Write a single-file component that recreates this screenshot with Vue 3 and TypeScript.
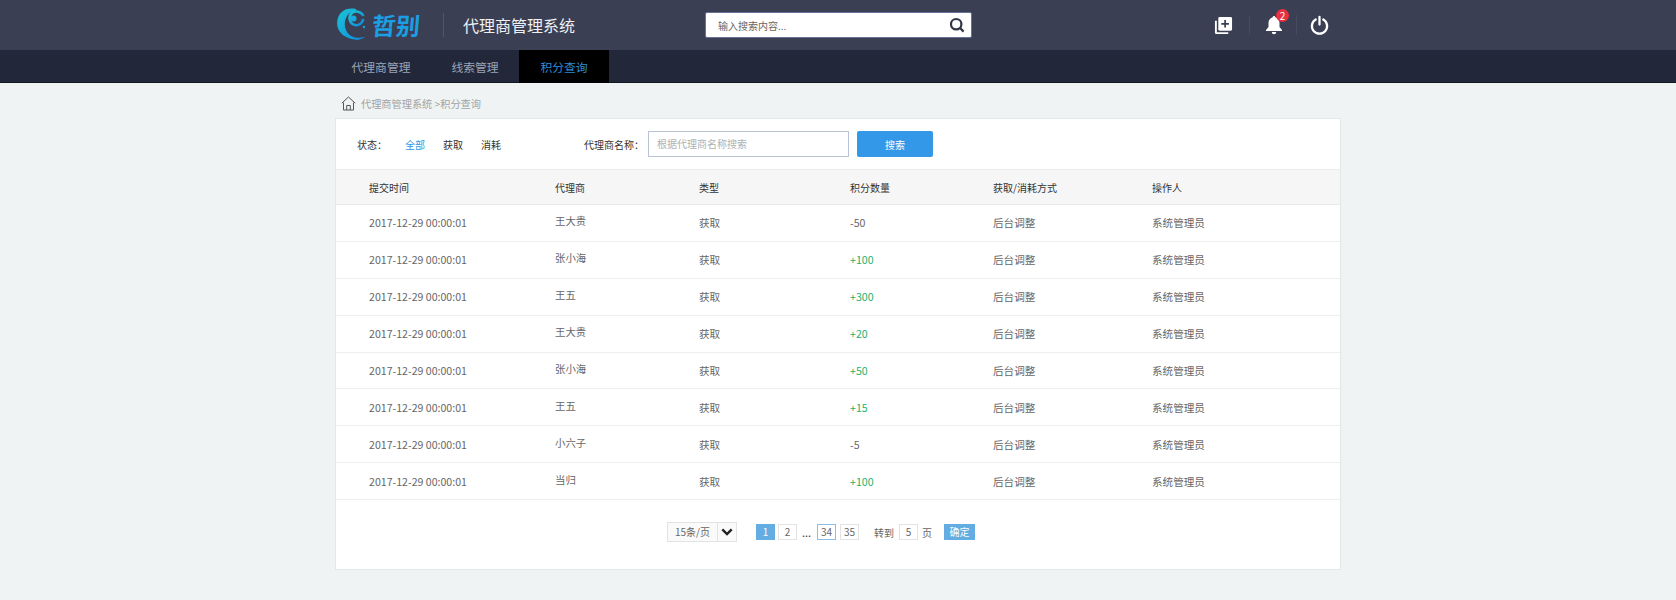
<script setup lang="ts">
interface Row { name: string; points: string }
const rows: Row[] = [
  { name: '王大贵', points: '-50' },
  { name: '张小海', points: '+100' },
  { name: '王五', points: '+300' },
  { name: '王大贵', points: '+20' },
  { name: '张小海', points: '+50' },
  { name: '王五', points: '+15' },
  { name: '小六子', points: '-5' },
  { name: '当归', points: '+100' },
]
</script>

<template>
  <div class="page">
    <header class="top">
      <div class="wrap top-in">
        <div class="logo">
          <svg width="31" height="34" viewBox="0 0 31 34">
            <defs>
              <linearGradient id="lg" x1="0" y1="0" x2="1" y2="1">
                <stop offset="0" stop-color="#19c6d6" />
                <stop offset="1" stop-color="#1088dd" />
              </linearGradient>
            </defs>
            <path fill="url(#lg)" d="M20 1C10 -1 3 4 1.500 12c-2 10 5 21 27.500 20-3 0-5 0-7-.500 3-.5 5-1 7-2.500-8 2-15 0-18-5C8 19 8 13 11 8c2-3 5-5 9-5z" />
            <path fill="none" stroke="url(#lg)" stroke-width="2.600" stroke-linecap="round" d="M27 7c-3-4-9-5-12-1-3 4-1 10 4 11 4 1 7-2 8-5" />
            <circle cx="17.500" cy="10.500" r="3" fill="#1aa8e0" />
            <circle cx="28" cy="19" r="1.200" fill="#1aa0e4" />
          </svg>
          <span class="logo-text">哲别</span>
        </div>
        <i class="logo-sep"></i>
        <span class="sys">代理商管理系统</span>
        <div class="search">
          <span>输入搜索内容...</span>
          <svg width="16" height="16" viewBox="0 0 16 16" fill="none" stroke="#2f3542" stroke-width="2.200">
            <circle cx="7.200" cy="7.200" r="5.200" />
            <path d="M10.800 10.800l3.800 3.800" />
          </svg>
        </div>
        <div class="tools">
          <svg width="19" height="19" viewBox="0 0 20 20">
            <path fill="#fff" d="M1 5h2v12h12v2H2.500A1.500 1.500 0 0 1 1 17.500z" />
            <rect x="4.500" y="1" width="14.500" height="14.500" rx="1.500" fill="#fff" />
            <path stroke="#3a3f54" stroke-width="1.800" d="M11.700 4.200v8M7.700 8.200h8" />
          </svg>
          <i class="tool-sep a"></i>
          <div class="bell">
            <svg width="18" height="20" viewBox="0 0 18 20">
              <path fill="#fff" d="M9 1c.8 0 1.300.6 1.300 1.300C13 3 14.500 5.300 14.500 8v4l2.500 3v1H1v-1l2.500-3V8c0-2.700 1.500-5 4.200-5.700C7.700 1.600 8.200 1 9 1z" />
              <path fill="#fff" d="M6.800 17h4.400a2.200 2.200 0 0 1-4.400 0z" />
            </svg>
            <b>2</b>
          </div>
          <i class="tool-sep b"></i>
          <svg width="19" height="20" viewBox="0 0 20 20" fill="none" stroke="#fff" stroke-width="2.400" stroke-linecap="round">
            <path d="M6 4.200a8 8 0 1 0 8 0" />
            <path d="M10 1.500v8" />
          </svg>
        </div>
      </div>
    </header>

    <nav class="nav">
      <div class="wrap nav-in">
        <a class="n1">代理商管理</a>
        <a class="n2">线索管理</a>
        <a class="n3">积分查询</a>
      </div>
    </nav>

    <main class="wrap">
      <div class="crumb">
        <svg width="15" height="15" viewBox="0 0 15 15" fill="none" stroke="#555" stroke-width="1">
          <path d="M.8 7.200L7.500 1l6.700 6.200M2.500 6.500v7.500h10V6.500M5.700 14V9.500h3.600V14" />
        </svg>
        <span>代理商管理系统 &gt;积分查询</span>
      </div>

      <section class="panel">
        <div class="filter">
          <span class="f-label">状态：</span>
          <a class="f-on">全部</a>
          <a class="f-a">获取</a>
          <a class="f-a">消耗</a>
          <span class="f-name">代理商名称：</span>
          <div class="f-input">根据代理商名称搜索</div>
          <button class="f-btn" type="button">搜索</button>
        </div>

        <div class="row head">
          <span>提交时间</span><span>代理商</span><span>类型</span><span>积分数量</span><span>获取/消耗方式</span><span>操作人</span>
        </div>
        <div v-for="(r, i) in rows" :key="i" class="row body">
          <span>2017-12-29 00:00:01</span>
          <span class="agent">{{ r.name }}</span>
          <span>获取</span>
          <span :class="{ plus: r.points.startsWith('+') }">{{ r.points }}</span>
          <span>后台调整</span>
          <span>系统管理员</span>
        </div>

        <div class="pager">
          <div class="size"><span>15条/页</span><i><svg width="12" height="8" viewBox="0 0 12 8" fill="none" stroke="#222" stroke-width="2.400"><path d="M1.300 1.300L6 6l4.700-4.700" /></svg></i></div>
          <a class="pg on">1</a>
          <a class="pg">2</a>
          <span class="dots">...</span>
          <a class="pg cur">34</a>
          <a class="pg">35</a>
          <span class="go">转到</span>
          <a class="pg five">5</a>
          <span class="ye">页</span>
          <a class="ok">确定</a>
        </div>
      </section>
    </main>
  </div>
</template>

<style>
html, body { margin: 0; background: #eff3f4; }
</style>

<style scoped>
.page { height: 600px; overflow: hidden; background: #eff3f4; font-family: "Noto Sans CJK SC", "Noto Sans", sans-serif; font-size: 11px; color: #666; }
.wrap { width: 1006px; margin-left: 335px; }
.top { height: 50px; background: #3b3f54; }
.top-in { height: 50px; display: flex; align-items: center; }
.logo { display: flex; align-items: center; width: 108px; padding-left: 1px; box-sizing: border-box; }
.logo-text { font-size: 24px; line-height: 30px; font-weight: 700; color: #1a9fe4; margin-left: 5px; transform: skewX(-5deg); }
.logo-sep { width: 1px; height: 24px; background: #50556a; }
.sys { margin-left: 19px; font-size: 16px; color: #eef0f3; line-height: 50px; }
.search { width: 267px; height: 26px; box-sizing: border-box; margin-left: 130px; background: #fff; border-radius: 2px; border: 1px solid #6a7199; display: flex; align-items: center; justify-content: space-between; padding: 0 6px 0 12px; color: #666; font-size: 10px; }
.tools { margin-left: auto; margin-right: 12px; display: flex; align-items: center; }
.tool-sep { width: 1px; height: 20px; background: #474b60; }
.tool-sep.a { margin: 0 15px 0 16px; }
.tool-sep.b { margin: 0 13px; }
.bell { position: relative; width: 18px; height: 20px; }
.bell b { position: absolute; left: 11px; top: -6px; width: 13px; height: 13px; border-radius: 50%; background: #e8303f; color: #fff; font-size: 10px; font-weight: 400; line-height: 13px; text-align: center; }
.nav { height: 33px; background: #23273a; border-bottom: 1px solid #15171f; box-sizing: border-box; }
.nav-in { display: flex; height: 33px; color: #9aa4b6; font-size: 11.800px; line-height: 33px; }
.nav-in a { display: block; text-align: center; box-sizing: border-box; }
.n1 { width: 92px; }
.n2 { width: 92px; padding-left: 4px; }
.n3 { width: 90px; background: #000; color: #2d8cd5; }
.crumb { height: 35px; box-sizing: border-box; padding: 6px 0 0 6px; display: flex; align-items: center; color: #a3a3a3; font-size: 10.200px; }
.crumb span { margin-left: 5px; }
.panel { height: 452px; box-sizing: border-box; background: #fff; border: 1px solid #e4e8e9; }
.filter { height: 50px; display: flex; align-items: center; color: #333; font-size: 10px; padding-left: 21px; }
.f-label { width: 48px; }
.f-on { color: #2f95e5; width: 38px; }
.f-a { width: 38px; }
.f-name { margin-left: 65px; width: 64px; }
.f-input { width: 201px; height: 26px; box-sizing: border-box; border: 1px solid #b9c5d6; line-height: 24px; padding-left: 8px; color: #b0b0b0; }
.f-btn { width: 76px; height: 26px; margin-left: 8px; border: 0; border-radius: 2px; background: #3498e8; color: #fff; font: inherit; }
.row { display: grid; grid-template-columns: 186px 144px 151px 143px 159px 1fr; padding-left: 33px; align-items: center; }
.head { height: 36px; background: #f6f6f6; border-top: 1px solid #eaecee; border-bottom: 1px solid #e8ebec; box-sizing: border-box; color: #333; font-size: 10px; }
.body { height: 36.900px; box-sizing: border-box; border-bottom: 1px solid #eceff0; font-size: 10.600px; color: #666; }
.agent { position: relative; top: -2px; font-size: 10.400px; }
.plus { color: #1fb069; }
.pager { display: flex; align-items: center; height: 64px; padding-left: 331px; color: #666; font-size: 10px; }
.size { display: flex; width: 70px; height: 20px; box-sizing: border-box; border: 1px solid #e3e3e3; background: #fafafa; line-height: 18px; }
.size span { width: 49px; text-align: center; border-right: 1px solid #e3e3e3; }
.size i { flex: 1; display: flex; align-items: center; justify-content: center; }
.pg { width: 19px; height: 16px; box-sizing: border-box; border: 1px solid #e3e3e3; text-align: center; line-height: 14px; margin-right: 3px; }
.on { background: #63ade2; border-color: #63ade2; color: #fff; margin-left: 19px; }
.dots { margin: 0 3px 0 2px; color: #333; width: 12px; font-size: 11px; }
.cur { border-color: #8dbfe6; margin-right: 4px; }
.go { margin-left: 12px; width: 25px; }
.five { margin: 0 4px 0 0; }
.ye { width: 15px; }
.ok { width: 31px; height: 16px; background: #63ade2; color: #fff; text-align: center; line-height: 16px; margin-left: 7px; }
</style>
